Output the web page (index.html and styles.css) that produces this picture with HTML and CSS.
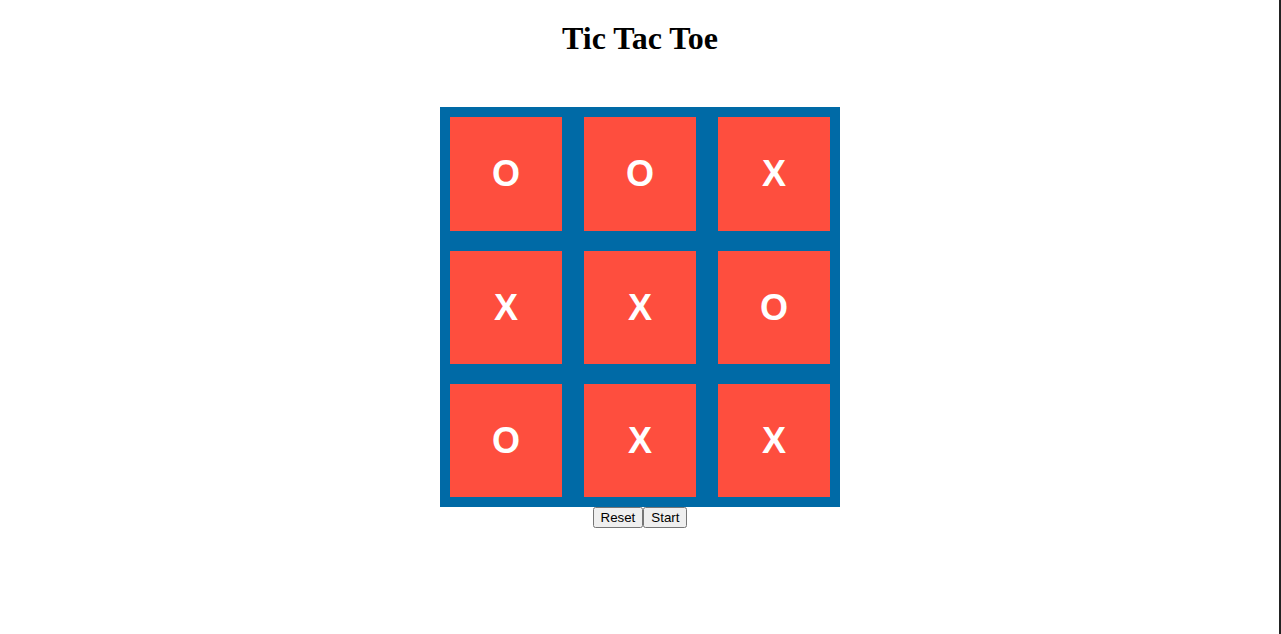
FILE: index.html
```html
<!DOCTYPE html>
<html>
<head>
<meta charset="utf-8">
<title>Tic Tac Toe</title>
<link rel="stylesheet" href="styles.css">
</head>
<body>
<div class="edge"></div>
<h1 class="title">Tic Tac Toe</h1>
<div class="board">
  <div class="cell">O</div>
  <div class="cell">O</div>
  <div class="cell">X</div>
  <div class="cell">X</div>
  <div class="cell">X</div>
  <div class="cell">O</div>
  <div class="cell">O</div>
  <div class="cell">X</div>
  <div class="cell">X</div>
</div>
<div class="controls">
  <button class="btn">Reset</button><button class="btn">Start</button>
</div>
</body>
</html>
```
FILE: styles.css
```css
body {
  margin: 8px 9px 8px 8px;
  font-family: "Liberation Serif", serif;
  background: #fff;
}
.edge {
  position: fixed;
  top: 0;
  right: 0;
  width: 2px;
  height: 100%;
  background: #222;
}
.title {
  text-align: center;
  font-size: 32px;
  font-weight: bold;
  margin: 12px 0 0;
}
.board {
  width: 380px;
  margin: 50px auto 0;
  padding: 10px;
  background: #006aa6;
  display: grid;
  grid-template-columns: 112px 112px 112px;
  grid-template-rows: 114px 113px 113px;
  column-gap: 22px;
  row-gap: 20px;
}
.cell {
  background: #fe4e3e;
  color: #fff;
  font-family: "Liberation Sans", Arial, sans-serif;
  font-weight: bold;
  font-size: 36px;
  display: flex;
  align-items: center;
  justify-content: center;
}
.controls {
  text-align: center;
  font-size: 0;
}
.btn {
  font-family: "Liberation Sans", Arial, sans-serif;
  font-size: 13.33px;
}
```
